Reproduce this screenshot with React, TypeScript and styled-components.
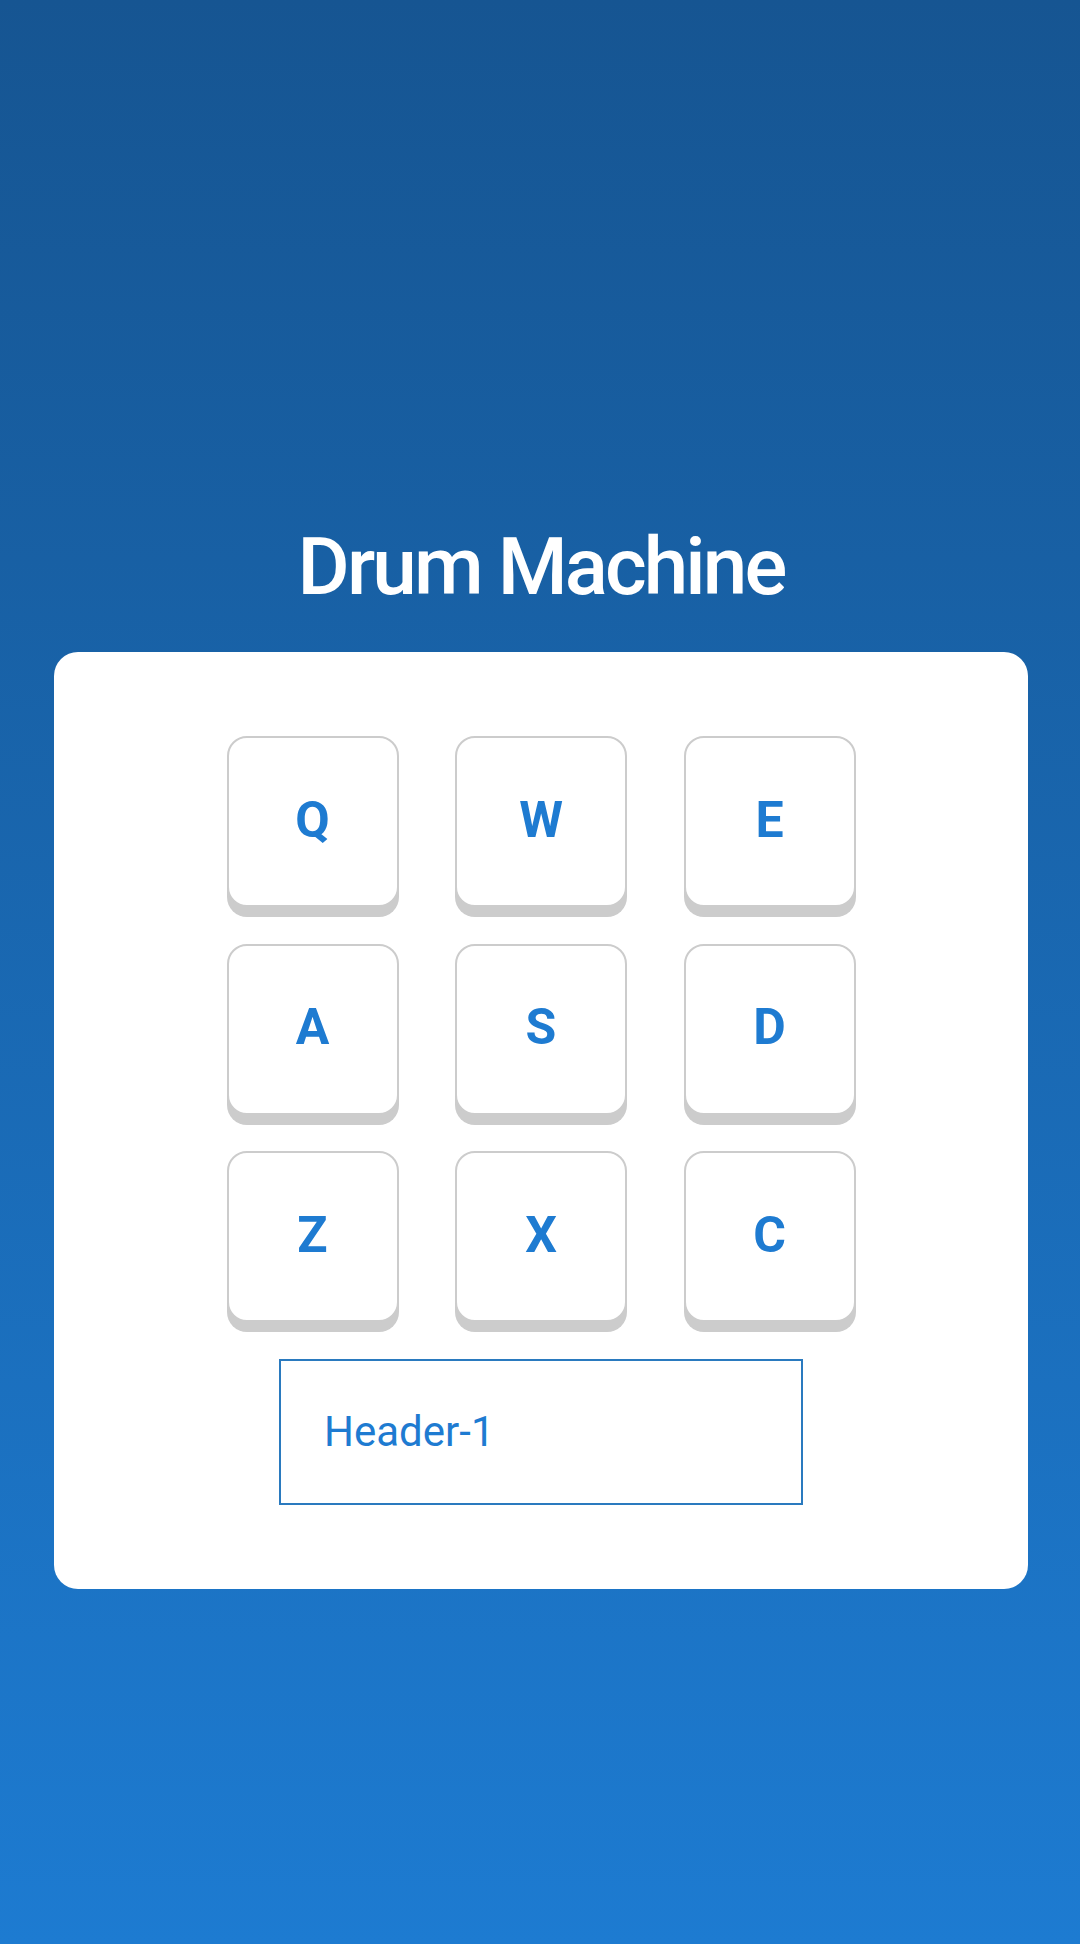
import React, { useState } from "react";
import styled, { createGlobalStyle } from "styled-components";

const GlobalStyle = createGlobalStyle`
  html, body {
    margin: 0;
    padding: 0;
  }
  body {
    font-family: Roboto, "Liberation Sans", sans-serif;
  }
`;

const PADS = [
  { key: "Q", name: "Header-1" },
  { key: "W", name: "Header-2" },
  { key: "E", name: "Header-3" },
  { key: "A", name: "Heater-4" },
  { key: "S", name: "Clap" },
  { key: "D", name: "Open-HH" },
  { key: "Z", name: "Kick-n'-Hat" },
  { key: "X", name: "Kick" },
  { key: "C", name: "Closed-HH" },
];

export default function App() {
  const [display, setDisplay] = useState("Header-1");

  return (
    <>
      <GlobalStyle />
      <Page>
        <Title>Drum Machine</Title>
        <Machine id="drum-machine">
          <PadGrid>
            {PADS.map((pad) => (
              <Pad key={pad.key} onClick={() => setDisplay(pad.name)}>
                {pad.key}
              </Pad>
            ))}
          </PadGrid>
          <Display id="display">{display}</Display>
        </Machine>
      </Page>
    </>
  );
}

const Page = styled.div`
  min-height: 1944px;
  box-sizing: border-box;
  padding: 519px 52px 0 54px;
  display: flex;
  flex-direction: column;
  align-items: center;
  background: linear-gradient(180deg, #165592 0%, #1d7bd1 100%);
`;

const Title = styled.h1`
  margin: 0 0 37px;
  font-size: 80px;
  line-height: 96px;
  font-weight: 500;
  color: #ffffff;
  letter-spacing: -2.9px;
`;

const Machine = styled.div`
  width: 974px;
  box-sizing: border-box;
  padding: 84px 0;
  background: #ffffff;
  border-radius: 24px;
  display: flex;
  flex-direction: column;
  align-items: center;
  gap: 36.5px;
`;

const PadGrid = styled.div`
  display: grid;
  grid-template-columns: repeat(3, 172px);
  grid-auto-rows: 171px;
  column-gap: 56.5px;
  row-gap: 36.5px;
`;

const Pad = styled.button`
  box-sizing: border-box;
  border: 2px solid #cccccc;
  border-radius: 20px;
  background: #ffffff;
  box-shadow: 0 10px 0 #cccccc;
  color: #1e7bd1;
  font-family: Roboto, "Liberation Sans", sans-serif;
  font-size: 50px;
  font-weight: 700;
  cursor: pointer;
  padding: 0 0 4px;
`;

const Display = styled.div`
  width: 524px;
  height: 146px;
  box-sizing: border-box;
  border: 2px solid #2a7abf;
  padding: 0 43px;
  display: flex;
  align-items: center;
  color: #1e7bd1;
  font-size: 42px;
`;
